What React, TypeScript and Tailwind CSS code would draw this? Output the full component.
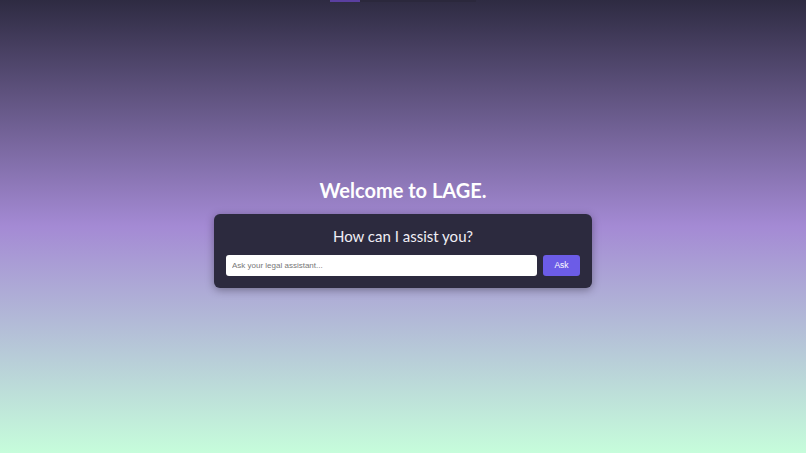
export default function App() {
  return (
    <div className="relative h-[453px] w-full overflow-hidden bg-[linear-gradient(to_bottom,#2e2b42_0%,#a48ad4_50%,#c6fddb_100%)] font-['Lato',sans-serif]">
      <div className="absolute left-[330px] top-0 flex h-[2px] w-[146px] bg-[#2b283c]">
        <div className="h-full w-[30px] bg-[#5a3fa0]" />
      </div>
      <div className="flex flex-col items-center pt-[176px]">
        <h1 className="text-[20px] font-bold leading-[28px] text-white">Welcome to LAGE.</h1>
        <div className="mt-[10px] w-[378px] rounded-[6px] bg-[#2c2a3e] px-[12px] pb-[12px] pt-[10px] shadow-[0_2px_8px_rgba(0,0,0,0.35)]">
          <div className="text-center text-[15px] font-normal leading-[24px] text-[#f0eef5]">How can I assist you?</div>
          <div className="mt-[7px] flex gap-[6px]">
            <input
              className="h-[21px] flex-1 rounded-[3px] bg-white px-[6px] font-['Liberation_Sans',sans-serif] text-[8px] text-[#333] outline-none placeholder:text-[#777]"
              placeholder="Ask your legal assistant..."
            />
            <button className="h-[21px] w-[37px] rounded-[3px] bg-[#6c5ce7] font-['Liberation_Sans',sans-serif] text-[8.5px] text-white">
              Ask
            </button>
          </div>
        </div>
      </div>
    </div>
  );
}
